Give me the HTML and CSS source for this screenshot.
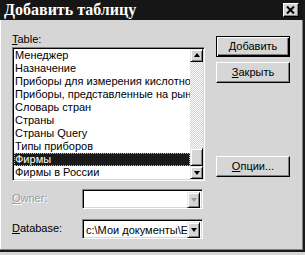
FILE: index.html
```html
<!DOCTYPE html>
<html>
<head>
<meta charset="utf-8">
<link rel="stylesheet" href="styles.css">
</head>
<body>
<div class="window">
  <div class="titlebar">
    <span class="title">Добавить таблицу</span>
    <span class="close"><svg width="9" height="8" viewBox="0 0 9 8"><path d="M1 0.5L8 7.5M8 0.5L1 7.5" stroke="#000" stroke-width="2"/></svg></span>
  </div>
  <div class="body">
    <div class="left">
      <div class="label"><u>T</u>able:</div>
      <div class="listbox">
        <ul class="items">
          <li>Менеджер</li>
          <li>Назначение</li>
          <li>Приборы для измерения кислотности</li>
          <li>Приборы, представленные на рынке</li>
          <li>Словарь стран</li>
          <li>Страны</li>
          <li>Страны Query</li>
          <li>Типы приборов</li>
          <li class="sel"><span class="focus">Фирмы</span></li>
          <li>Фирмы в России</li>
        </ul>
        <div class="vscroll">
          <div class="sbtn"><span class="arr up"></span></div>
          <div class="track"><div class="thumb"></div></div>
          <div class="sbtn"><span class="arr down"></span></div>
        </div>
      </div>
      <div class="form">
        <div class="label disabled"><u>O</u>wner:</div>
        <div class="combo">
          <div class="ctext"></div>
          <div class="sbtn cbtn"><span class="arr down dis"></span></div>
        </div>
        <div class="label"><u>D</u>atabase:</div>
        <div class="combo">
          <div class="ctext">c:\Мои документы\Excel</div>
          <div class="sbtn cbtn"><span class="arr down"></span></div>
        </div>
      </div>
    </div>
    <div class="right">
      <div class="btn default"><span><u>Д</u>обавить</span></div>
      <div class="btn close-btn"><span><u>З</u>акрыть</span></div>
      <div class="btn options"><span><u>О</u>пции...</span></div>
    </div>
  </div>
</div>
</body>
</html>
```
FILE: styles.css
```css
* { box-sizing: border-box; margin: 0; padding: 0; }
html, body { width: 305px; height: 255px; overflow: hidden; background: #d6d6d6; }
body { font-family: "Liberation Sans", Arial, sans-serif; font-size: 11px; color: #000; }
u { text-decoration: underline; text-underline-offset: 1px; }

.window {
  width: 305px; height: 252px;
  background: #d6d6d6;
  border-right: 2px solid #1a1a1a;
  border-bottom: 2px solid #1a1a1a;
  box-shadow: inset -1px -1px #808080, inset 1px 0 #fff;
  display: flex; flex-direction: column;
}
.titlebar {
  height: 20px; flex: none;
  background: #161616;
  display: flex; align-items: center; justify-content: space-between;
  padding: 0 4px 0 4px;
}
.title {
  font-family: "Liberation Serif", "Times New Roman", serif;
  font-weight: bold; font-size: 16px; line-height: 20px; color: #fff;
}
.close {
  width: 16px; height: 14px;
  background: #d6d6d6;
  border-top: 1px solid #fff; border-left: 1px solid #fff;
  border-right: 1px solid #000; border-bottom: 1px solid #000;
  box-shadow: inset -1px -1px #808080;
  display: flex; align-items: center; justify-content: center;
}
.close svg { display: block; margin-left: -1px; }

.body { display: flex; padding: 13px 0 0 12px; }
.left { width: 193px; display: flex; flex-direction: column; }
.label { height: 14px; line-height: 13px; }
.label.disabled { color: #9a9a9a; text-shadow: 1px 1px #fff; }

.listbox {
  height: 134px; width: 193px;
  background: #fff;
  border-top: 1px solid #808080; border-left: 1px solid #808080;
  border-right: 1px solid #fff; border-bottom: 1px solid #fff;
  box-shadow: inset 1px 1px #000, inset -1px -1px #d6d6d6;
  padding: 1px;
  display: flex;
}
.items { list-style: none; flex: 1; min-width: 0; overflow: hidden; }
.items li { height: 13px; line-height: 13px; white-space: nowrap; overflow: hidden; padding-left: 1px; }
.items li.sel { background: #1a1a1a; color: #fff; padding-left: 0; }
.focus { display: block; height: 13px; border: 1px dotted #bbb; line-height: 11px; padding-left: 0; }

.vscroll { width: 13px; display: flex; flex-direction: column; flex: none; }
.track {
  flex: 1; display: flex; flex-direction: column; justify-content: flex-end;
  background-color: #fff;
  background-image: repeating-conic-gradient(#cfcfcf 0 25%, #fff 0 50%);
  background-size: 2px 2px;
}
.sbtn {
  width: 13px; height: 13px; flex: none;
  background: #d6d6d6;
  border-top: 1px solid #e8e8e8; border-left: 1px solid #e8e8e8;
  border-right: 1px solid #000; border-bottom: 1px solid #000;
  box-shadow: inset 1px 1px #fff, inset -1px -1px #808080;
  display: flex; align-items: center; justify-content: center;
}
.thumb {
  height: 18px;
  background: #d6d6d6;
  border-top: 1px solid #e8e8e8; border-left: 1px solid #e8e8e8;
  border-right: 1px solid #000; border-bottom: 1px solid #000;
  box-shadow: inset 1px 1px #fff, inset -1px -1px #808080;
}
.arr { width: 0; height: 0; border-left: 3px solid transparent; border-right: 3px solid transparent; }
.arr.up { border-bottom: 4px solid #000; margin-top: -1px; }
.arr.down { border-top: 4px solid #000; }
.arr.dis { border-top-color: #9a9a9a; }

.form {
  display: grid;
  grid-template-columns: 70px 121px;
  grid-auto-rows: 20px;
  row-gap: 10px;
  margin-top: 8px;
  align-items: center;
}
.combo {
  height: 20px;
  background: #fff;
  border-top: 1px solid #808080; border-left: 1px solid #808080;
  border-right: 1px solid #fff; border-bottom: 1px solid #fff;
  box-shadow: inset 1px 1px #000, inset -1px -1px #d6d6d6;
  padding: 2px;
  display: flex; align-items: stretch;
}
.ctext { flex: 1; min-width: 0; overflow: hidden; white-space: nowrap; line-height: 16px; padding-left: 1px; }
.cbtn { height: 16px; width: 13px; }

.right { display: flex; flex-direction: column; margin-left: 11px; padding-top: 3px; }
.btn {
  width: 74px; height: 21px;
  background: #d6d6d6;
  border-top: 1px solid #fff; border-left: 1px solid #fff;
  border-right: 1px solid #000; border-bottom: 1px solid #000;
  box-shadow: inset -1px -1px #808080;
  display: flex; align-items: center; justify-content: center;
  line-height: 13px;
}
.btn.default {
  border: 1px solid #000;
  box-shadow: inset 1px 1px #fff, inset -1px -1px #000, inset -2px -2px #808080;
}
.close-btn { margin-top: 5px; }
.options { margin-top: 73px; }
```
